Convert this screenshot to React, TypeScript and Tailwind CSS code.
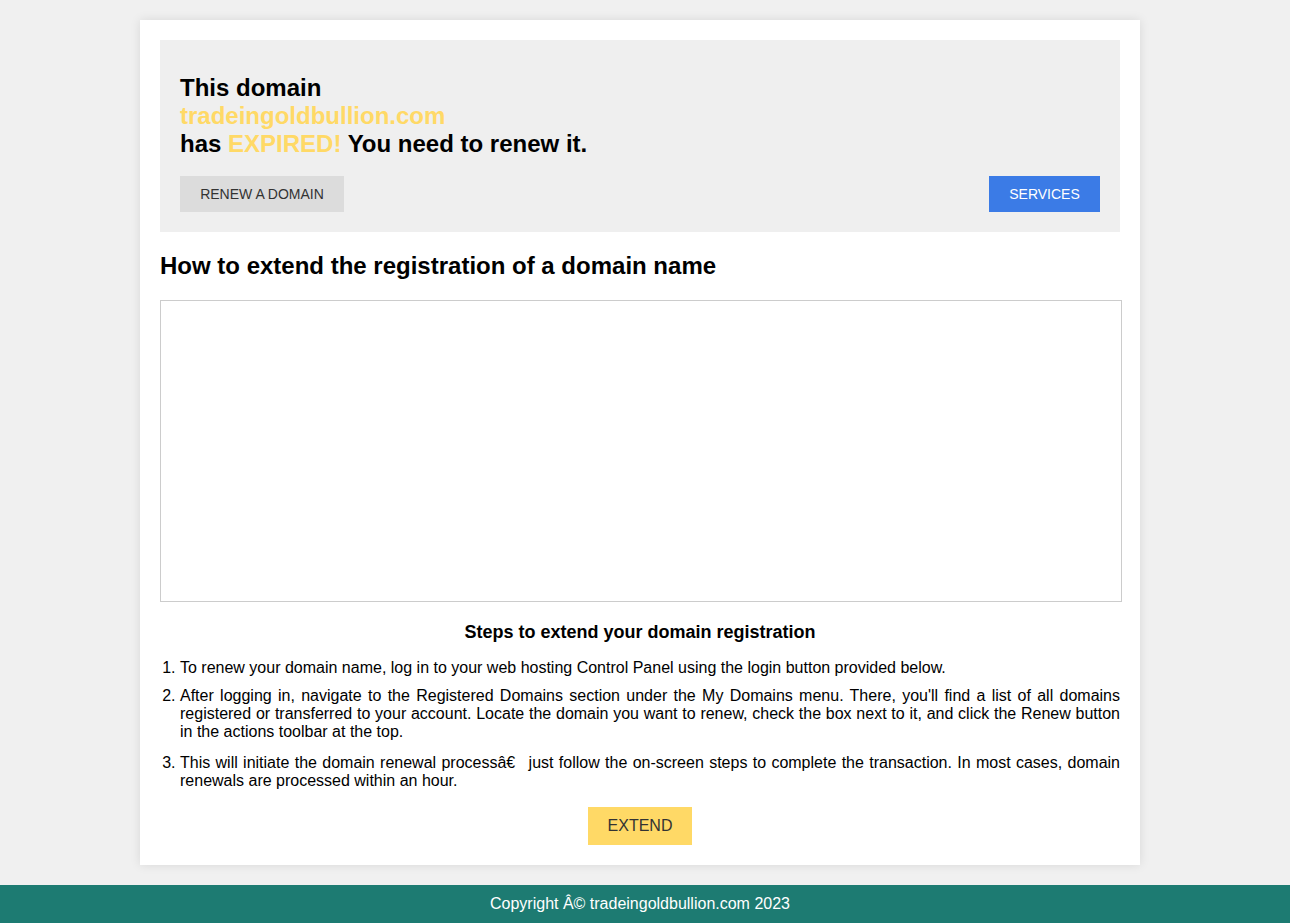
export default function App() {
  return (
    <div className="min-h-screen bg-[#f0f0f0] flex flex-col font-['Liberation_Sans',Arial,sans-serif] text-black">
      <div className="flex-1 pt-5 pb-5">
        <div className="w-[1000px] ml-[140px] bg-white p-5 shadow-[0_0_10px_rgba(0,0,0,0.1)]">
          {/* Expired banner */}
          <div className="bg-[#efefef] px-5 pt-[34px] pb-5">
            <h1 className="text-[24px] leading-[28px] font-bold">
              This domain
              <br />
              <span className="text-[#ffd966]">tradeingoldbullion.com</span>
              <br />
              has <span className="text-[#ffd966]">EXPIRED!</span> You need to renew it.
            </h1>
            <div className="mt-[18px] flex items-center justify-between">
              <button className="h-9 w-[164px] bg-[#dcdcdc] text-[14px] text-[#333] uppercase">
                Renew a domain
              </button>
              <button className="h-9 w-[111px] bg-[#3b7be6] text-[14px] text-white uppercase">
                Services
              </button>
            </div>
          </div>

          <h2 className="mt-5 text-[24px] leading-[28px] font-bold">
            How to extend the registration of a domain name
          </h2>

          <div className="mt-5 w-[962px] h-[302px] border border-[#cccccc] bg-white" />

          <h3 className="mt-[20px] text-center text-[18px] leading-[21px] font-bold">
            Steps to extend your domain registration
          </h3>

          <ol className="mt-[16px] pl-5 list-decimal text-[16px] leading-[18px] text-justify">
            <li className="mb-[10px]">
              To renew your domain name, log in to your web hosting Control Panel using the login button provided below.
            </li>
            <li className="mb-[13px]">
              After logging in, navigate to the Registered Domains section under the My Domains menu. There, you'll find a list of all domains registered or transferred to your account. Locate the domain you want to renew, check the box next to it, and click the Renew button in the actions toolbar at the top.
            </li>
            <li>
              This will initiate the domain renewal processâ€{"\u2002"} just follow the on-screen steps to complete the transaction. In most cases, domain renewals are processed within an hour.
            </li>
          </ol>

          <div className="mt-[17px] flex justify-center">
            <button className="h-[38px] w-[104px] bg-[#ffd966] text-[16px] text-[#333] uppercase">
              Extend
            </button>
          </div>
        </div>
      </div>

      <footer className="h-[38px] bg-[#1d7b72] pr-[10px] flex items-center justify-center text-white text-[16px]">
        Copyright Â© tradeingoldbullion.com 2023
      </footer>
    </div>
  );
}
